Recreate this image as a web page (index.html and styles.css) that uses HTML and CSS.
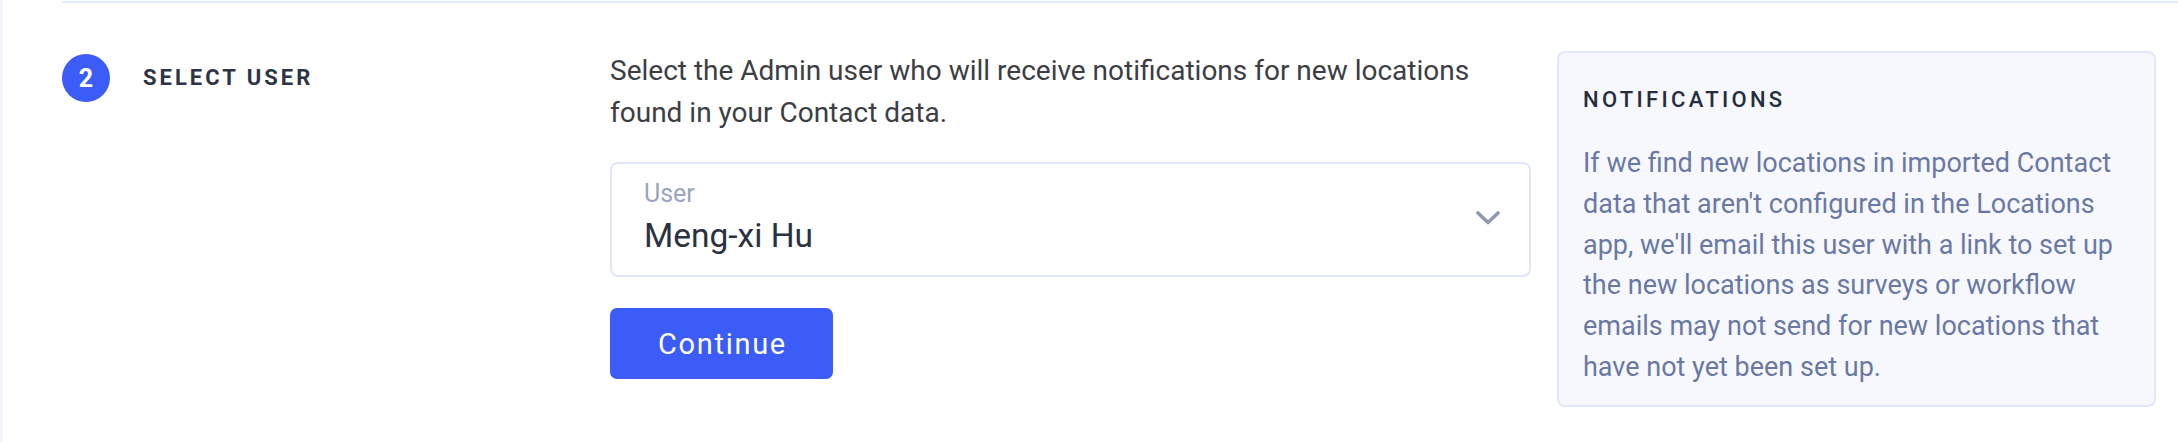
FILE: index.html
```html
<!DOCTYPE html>
<html lang="en">
<head>
<meta charset="utf-8">
<title>Select user</title>
<link rel="stylesheet" href="styles.css">
</head>
<body>
<div class="page">
  <section class="step">
    <div class="step-head">
      <span class="step-num">2</span>
      <h2 class="step-title">SELECT USER</h2>
    </div>
    <div class="step-main">
      <p class="step-desc">Select the Admin user who will receive notifications for new locations found in your Contact data.</p>
      <div class="select">
        <div class="select-text">
          <div class="select-label">User</div>
          <div class="select-value">Meng-xi Hu</div>
        </div>
        <svg class="chevron" width="24" height="14" viewBox="0 0 24 14" aria-hidden="true">
          <polyline points="2,2 12,11.5 22,2" fill="none" stroke="#8f98b5" stroke-width="3.6" stroke-linecap="round" stroke-linejoin="round"/>
        </svg>
      </div>
      <button class="btn" type="button">Continue</button>
    </div>
    <aside class="info">
      <h3 class="info-title">NOTIFICATIONS</h3>
      <p class="info-text">If we find new locations in imported Contact data that aren't configured in the Locations app, we'll email this user with a link to set up the new locations as surveys or workflow emails may not send for new locations that have not yet been set up.</p>
    </aside>
  </section>
</div>
</body>
</html>
```

FILE: styles.css
```css
* { box-sizing: border-box; }

html, body {
  margin: 0;
  padding: 0;
  background: #ffffff;
  font-family: Roboto, "Liberation Sans", Arial, sans-serif;
}

body {
  height: 442px;
  overflow: hidden;
}

.page {
  height: 442px;
  border-left: 3px solid #f4f4fb;
  padding-top: 1px;
}

.step {
  margin-left: 59px;
  border-top: 2px solid #e4e9fb;
  padding-top: 48px;
  display: grid;
  grid-template-columns: 548px 921px 1fr;
  align-items: start;
}

.step-head {
  display: flex;
  align-items: center;
  gap: 33px;
  margin-top: 3px;
}

.step-num {
  width: 48px;
  height: 48px;
  border-radius: 50%;
  background: #3b5cf6;
  color: #ffffff;
  font-weight: 700;
  font-size: 25px;
  display: flex;
  align-items: center;
  justify-content: center;
  flex: 0 0 auto;
}

.step-title {
  margin: 0;
  font-size: 22px;
  font-weight: 700;
  letter-spacing: 3px;
  color: #2e3446;
  line-height: 28px;
}

.step-main {
  display: flex;
  flex-direction: column;
  align-items: flex-start;
}

.step-desc {
  margin: -1px 0 0;
  font-size: 28px;
  line-height: 42px;
  color: #3c3e43;
  width: 100%;
}

.select {
  margin-top: 28px;
  width: 100%;
  border: 2px solid #e1e7fb;
  border-radius: 8px;
  padding: 15px 29px 18px 32px;
  display: flex;
  align-items: center;
  justify-content: space-between;
  background: #ffffff;
}

.select-label {
  font-size: 25px;
  line-height: 30px;
  color: #9ba4c0;
}

.select-value {
  margin-top: 6px;
  font-size: 33.5px;
  line-height: 42px;
  color: #2a3142;
}

.chevron { display: block; flex: 0 0 auto; }

.btn {
  margin-top: 31px;
  height: 71px;
  padding: 0 46px 0 48px;
  border: none;
  border-radius: 7px;
  background: #3b5cf6;
  color: #ffffff;
  font-family: Roboto, "Liberation Sans", Arial, sans-serif;
  font-size: 29px;
  font-weight: 400;
  letter-spacing: 1.7px;
  cursor: pointer;
}

.info {
  margin: 0 22px 0 26px;
  background: #f7f8fe;
  border: 2px solid #e1e7fb;
  border-radius: 8px;
  padding: 33px 12px 17px 24px;
}

.info-title {
  margin: 0;
  font-size: 22px;
  line-height: 28px;
  font-weight: 500;
  letter-spacing: 3.3px;
  color: #262d3d;
}

.info-text {
  margin: 29px 0 0;
  font-size: 27px;
  line-height: 40.8px;
  color: #6a79a3;
}
```
